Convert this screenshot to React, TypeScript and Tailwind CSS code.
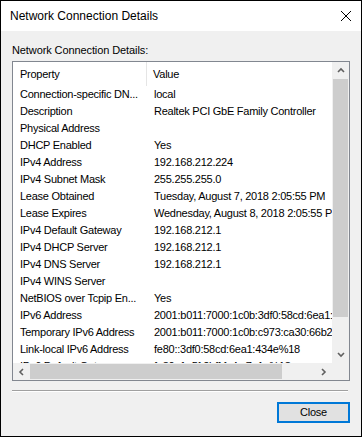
import React from "react";

const rows: [string, string][] = [
  ["Connection-specific DN...", "local"],
  ["Description", "Realtek PCI GbE Family Controller"],
  ["Physical Address", ""],
  ["DHCP Enabled", "Yes"],
  ["IPv4 Address", "192.168.212.224"],
  ["IPv4 Subnet Mask", "255.255.255.0"],
  ["Lease Obtained", "Tuesday, August 7, 2018 2:05:55 PM"],
  ["Lease Expires", "Wednesday, August 8, 2018 2:05:55 PM"],
  ["IPv4 Default Gateway", "192.168.212.1"],
  ["IPv4 DHCP Server", "192.168.212.1"],
  ["IPv4 DNS Server", "192.168.212.1"],
  ["IPv4 WINS Server", ""],
  ["NetBIOS over Tcpip En...", "Yes"],
  ["IPv6 Address", "2001:b011:7000:1c0b:3df0:58cd:6ea1:434e"],
  ["Temporary IPv6 Address", "2001:b011:7000:1c0b:c973:ca30:66b2:91a4"],
  ["Link-local IPv6 Address", "fe80::3df0:58cd:6ea1:434e%18"],
  ["IPv6 Default Gateway", "fe80::1e5f:2bff:fe4c:7a1a%18"],
];

function Chevron({ dir }: { dir: "up" | "down" | "left" | "right" }) {
  const d = {
    up: "M1 5 L4 2 L7 5",
    down: "M1 2 L4 5 L7 2",
    left: "M5 1 L2 4 L5 7",
    right: "M2 1 L5 4 L2 7",
  }[dir];
  const w = dir === "up" || dir === "down" ? 8 : 7;
  const h = dir === "up" || dir === "down" ? 7 : 8;
  return (
    <svg width={w} height={h} viewBox={`0 0 ${w} ${h}`}>
      <path d={d} fill="none" stroke="#606060" strokeWidth="1.6" />
    </svg>
  );
}

export default function App() {
  return (
    <div
      className="w-[362px] h-[437px] border border-black bg-[#f0f0f0] flex flex-col text-black text-[11px] tracking-[-0.25px]"
      style={{ fontFamily: '"Liberation Sans", Arial, sans-serif' }}
    >
      {/* title bar */}
      <div className="h-[30px] bg-white flex items-center justify-between pl-[9px] pr-[9px] shrink-0">
        <span className="text-[12px] tracking-normal">Network Connection Details</span>
        <svg width="12" height="12" viewBox="0 0 12 12">
          <path d="M1 1 L11 11 M11 1 L1 11" stroke="#000" strokeWidth="1" />
        </svg>
      </div>

      <div className="flex-1 flex flex-col px-[11px]">
        <div className="mt-[11px] h-[17px] leading-[17px] tracking-[-0.1px]">
          Network Connection Details:
        </div>

        {/* list view */}
        <div className="mt-[2px] h-[320px] border border-[#828790] bg-white grid grid-cols-[1fr_17px] grid-rows-[1fr_17px]">
          <div className="overflow-hidden whitespace-nowrap">
            <div className="flex h-[24px] items-center">
              <div className="w-[134px] pl-[7px] border-r border-[#e5e5e5] h-full flex items-center">
                Property
              </div>
              <div className="pl-[6px]">Value</div>
            </div>
            {rows.map(([k, v]) => (
              <div key={k} className="flex h-[17px] items-center">
                <div className="w-[135px] pl-[7px] shrink-0">{k}</div>
                <div className="pl-[6px]">{v}</div>
              </div>
            ))}
          </div>

          {/* vertical scrollbar */}
          <div className="bg-[#f0f0f0] flex flex-col">
            <div className="h-[17px] flex items-center justify-center">
              <Chevron dir="up" />
            </div>
            <div className="flex-1 flex flex-col">
              <div className="h-[238px] mx-px bg-[#cdcdcd]" />
            </div>
            <div className="h-[17px] flex items-center justify-center">
              <Chevron dir="down" />
            </div>
          </div>

          {/* horizontal scrollbar */}
          <div className="bg-[#f0f0f0] flex">
            <div className="w-[17px] flex items-center justify-center">
              <Chevron dir="left" />
            </div>
            <div className="flex-1 flex items-center">
              <div className="w-[252px] h-[15px] bg-[#cdcdcd]" />
            </div>
            <div className="w-[17px] flex items-center justify-center">
              <Chevron dir="right" />
            </div>
          </div>
          <div className="bg-[#f0f0f0]" />
        </div>

        {/* separator */}
        <div className="mt-[9px] border-t border-[#a0a0a0] border-b border-b-white mr-[2px]" />

        <div className="flex justify-end mt-[10px]">
          <button
            type="button"
            className="w-[73px] h-[21px] border-2 border-[#0078d7] bg-[#e1e1e1] flex items-center justify-center"
          >
            Close
          </button>
        </div>
      </div>
    </div>
  );
}
